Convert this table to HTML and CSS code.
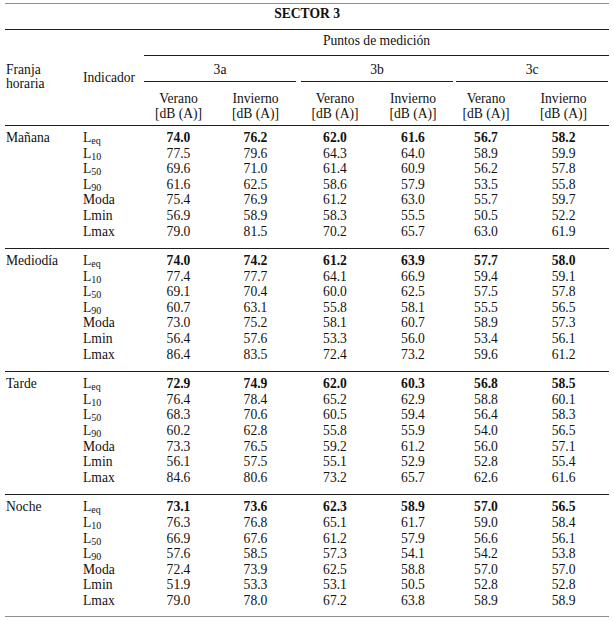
FILE: index.html
```html
<!DOCTYPE html>
<html lang="es">
<head>
<meta charset="utf-8">
<title>Sector 3</title>
<link rel="stylesheet" href="styles.css">
</head>
<body>
<table class="tbl">
  <colgroup>
    <col class="c-franja"><col class="c-ind">
    <col class="c-v1"><col class="c-i1">
    <col class="c-v2"><col class="c-i2">
    <col class="c-v3"><col class="c-i3">
  </colgroup>
  <thead>
    <tr><th colspan="8" class="title">SECTOR 3</th></tr>
    <tr>
      <th rowspan="3" class="franja">Franja<br>horaria</th>
      <th rowspan="3" class="ind-h">Indicador</th>
      <th colspan="6" class="puntos">Puntos de medición</th>
    </tr>
    <tr>
      <th colspan="2" class="grp"><div class="grp-line g-a">3a</div></th>
      <th colspan="2" class="grp"><div class="grp-line g-b">3b</div></th>
      <th colspan="2" class="grp"><div class="grp-line g-c">3c</div></th>
    </tr>
    <tr>
      <th class="unit">Verano<br>[dB (A)]</th><th class="unit">Invierno<br>[dB (A)]</th>
      <th class="unit">Verano<br>[dB (A)]</th><th class="unit">Invierno<br>[dB (A)]</th>
      <th class="unit">Verano<br>[dB (A)]</th><th class="unit">Invierno<br>[dB (A)]</th>
    </tr>
  </thead>
  <tbody>
    <tr class="first"><td class="lab">Mañana</td><td class="ind">L<sub>eq</sub></td><td class="b">74.0</td><td class="b">76.2</td><td class="b">62.0</td><td class="b">61.6</td><td class="b">56.7</td><td class="b">58.2</td></tr>
    <tr><td class="lab"></td><td class="ind">L<sub>10</sub></td><td>77.5</td><td>79.6</td><td>64.3</td><td>64.0</td><td>58.9</td><td>59.9</td></tr>
    <tr><td class="lab"></td><td class="ind">L<sub>50</sub></td><td>69.6</td><td>71.0</td><td>61.4</td><td>60.9</td><td>56.2</td><td>57.8</td></tr>
    <tr><td class="lab"></td><td class="ind">L<sub>90</sub></td><td>61.6</td><td>62.5</td><td>58.6</td><td>57.9</td><td>53.5</td><td>55.8</td></tr>
    <tr><td class="lab"></td><td class="ind">Moda</td><td>75.4</td><td>76.9</td><td>61.2</td><td>63.0</td><td>55.7</td><td>59.7</td></tr>
    <tr><td class="lab"></td><td class="ind">Lmin</td><td>56.9</td><td>58.9</td><td>58.3</td><td>55.5</td><td>50.5</td><td>52.2</td></tr>
    <tr class="last"><td class="lab"></td><td class="ind">Lmax</td><td>79.0</td><td>81.5</td><td>70.2</td><td>65.7</td><td>63.0</td><td>61.9</td></tr>
  </tbody>
  <tbody>
    <tr class="first"><td class="lab">Mediodía</td><td class="ind">L<sub>eq</sub></td><td class="b">74.0</td><td class="b">74.2</td><td class="b">61.2</td><td class="b">63.9</td><td class="b">57.7</td><td class="b">58.0</td></tr>
    <tr><td class="lab"></td><td class="ind">L<sub>10</sub></td><td>77.4</td><td>77.7</td><td>64.1</td><td>66.9</td><td>59.4</td><td>59.1</td></tr>
    <tr><td class="lab"></td><td class="ind">L<sub>50</sub></td><td>69.1</td><td>70.4</td><td>60.0</td><td>62.5</td><td>57.5</td><td>57.8</td></tr>
    <tr><td class="lab"></td><td class="ind">L<sub>90</sub></td><td>60.7</td><td>63.1</td><td>55.8</td><td>58.1</td><td>55.5</td><td>56.5</td></tr>
    <tr><td class="lab"></td><td class="ind">Moda</td><td>73.0</td><td>75.2</td><td>58.1</td><td>60.7</td><td>58.9</td><td>57.3</td></tr>
    <tr><td class="lab"></td><td class="ind">Lmin</td><td>56.4</td><td>57.6</td><td>53.3</td><td>56.0</td><td>53.4</td><td>56.1</td></tr>
    <tr class="last"><td class="lab"></td><td class="ind">Lmax</td><td>86.4</td><td>83.5</td><td>72.4</td><td>73.2</td><td>59.6</td><td>61.2</td></tr>
  </tbody>
  <tbody>
    <tr class="first"><td class="lab">Tarde</td><td class="ind">L<sub>eq</sub></td><td class="b">72.9</td><td class="b">74.9</td><td class="b">62.0</td><td class="b">60.3</td><td class="b">56.8</td><td class="b">58.5</td></tr>
    <tr><td class="lab"></td><td class="ind">L<sub>10</sub></td><td>76.4</td><td>78.4</td><td>65.2</td><td>62.9</td><td>58.8</td><td>60.1</td></tr>
    <tr><td class="lab"></td><td class="ind">L<sub>50</sub></td><td>68.3</td><td>70.6</td><td>60.5</td><td>59.4</td><td>56.4</td><td>58.3</td></tr>
    <tr><td class="lab"></td><td class="ind">L<sub>90</sub></td><td>60.2</td><td>62.8</td><td>55.8</td><td>55.9</td><td>54.0</td><td>56.5</td></tr>
    <tr><td class="lab"></td><td class="ind">Moda</td><td>73.3</td><td>76.5</td><td>59.2</td><td>61.2</td><td>56.0</td><td>57.1</td></tr>
    <tr><td class="lab"></td><td class="ind">Lmin</td><td>56.1</td><td>57.5</td><td>55.1</td><td>52.9</td><td>52.8</td><td>55.4</td></tr>
    <tr class="last"><td class="lab"></td><td class="ind">Lmax</td><td>84.6</td><td>80.6</td><td>73.2</td><td>65.7</td><td>62.6</td><td>61.6</td></tr>
  </tbody>
  <tbody class="end">
    <tr class="first"><td class="lab">Noche</td><td class="ind">L<sub>eq</sub></td><td class="b">73.1</td><td class="b">73.6</td><td class="b">62.3</td><td class="b">58.9</td><td class="b">57.0</td><td class="b">56.5</td></tr>
    <tr><td class="lab"></td><td class="ind">L<sub>10</sub></td><td>76.3</td><td>76.8</td><td>65.1</td><td>61.7</td><td>59.0</td><td>58.4</td></tr>
    <tr><td class="lab"></td><td class="ind">L<sub>50</sub></td><td>66.9</td><td>67.6</td><td>61.2</td><td>57.9</td><td>56.6</td><td>56.1</td></tr>
    <tr><td class="lab"></td><td class="ind">L<sub>90</sub></td><td>57.6</td><td>58.5</td><td>57.3</td><td>54.1</td><td>54.2</td><td>53.8</td></tr>
    <tr><td class="lab"></td><td class="ind">Moda</td><td>72.4</td><td>73.9</td><td>62.5</td><td>58.8</td><td>57.0</td><td>57.0</td></tr>
    <tr><td class="lab"></td><td class="ind">Lmin</td><td>51.9</td><td>53.3</td><td>53.1</td><td>50.5</td><td>52.8</td><td>52.8</td></tr>
    <tr class="last"><td class="lab"></td><td class="ind">Lmax</td><td>79.0</td><td>78.0</td><td>67.2</td><td>63.8</td><td>58.9</td><td>58.9</td></tr>
  </tbody>
</table>
</body>
</html>
```
FILE: styles.css
```css
html, body {
  margin: 0;
  padding: 0;
  background: #ffffff;
}

body {
  font-family: "Liberation Serif", "Times New Roman", serif;
  font-size: 13.6px;
  color: #111111;
}

.tbl {
  margin: 3px 0 0 5px;
  width: 604px;
  table-layout: fixed;
  border-collapse: separate;
  border-spacing: 0;
}

.c-franja { width: 76px; }
.c-ind { width: 63px; }
.c-v1 { width: 69px; }
.c-i1 { width: 85px; }
.c-v2 { width: 74px; }
.c-i2 { width: 82px; }
.c-v3 { width: 64px; }
.c-i3 { width: 91px; }

.tbl th,
.tbl td {
  padding: 0;
  font-weight: normal;
  text-align: center;
  line-height: 15.6px;
}

.tbl .title {
  font-weight: bold;
  border-top: 1px solid #8e8e8e;
  border-bottom: 1px solid #1e1e1e;
  padding: 2px 0 7.4px;
}

.tbl .puntos {
  padding: 2.6px 0 6.8px;
  border-bottom: 1px solid #1e1e1e;
}

.tbl .franja {
  text-align: left;
  vertical-align: middle;
  line-height: 14.5px;
  padding-left: 1px;
  border-bottom: 1px solid #1e1e1e;
}

.tbl .ind-h {
  text-align: left;
  vertical-align: middle;
  line-height: 15px;
  padding-left: 2px;
  border-bottom: 1px solid #1e1e1e;
}

.grp-line {
  padding: 5.6px 0 3.8px;
  border-bottom: 1px solid #1e1e1e;
}

.g-a { margin: 0 2px 0 0; }
.g-b { margin: 0 1px 0 3px; }
.g-c { margin: 0 1px 0 2px; }

.tbl .unit {
  line-height: 15px;
  padding: 9.2px 0 3.8px;
  border-bottom: 1px solid #1e1e1e;
  vertical-align: top;
}

.tbl td.lab {
  text-align: left;
  padding-left: 1px;
}

.tbl td.ind {
  text-align: left;
  padding-left: 2px;
}

.tbl td.b {
  font-weight: bold;
}

.tbl sub {
  font-size: 10px;
  line-height: 0;
  vertical-align: -1.5px;
}

.tbl tr.first td {
  padding-top: 4px;
}

.tbl tr.last td {
  padding-bottom: 9px;
  border-bottom: 1px solid #1e1e1e;
}

.tbl .end tr.last td {
  padding-bottom: 7px;
  border-bottom-color: #8e8e8e;
}
```
